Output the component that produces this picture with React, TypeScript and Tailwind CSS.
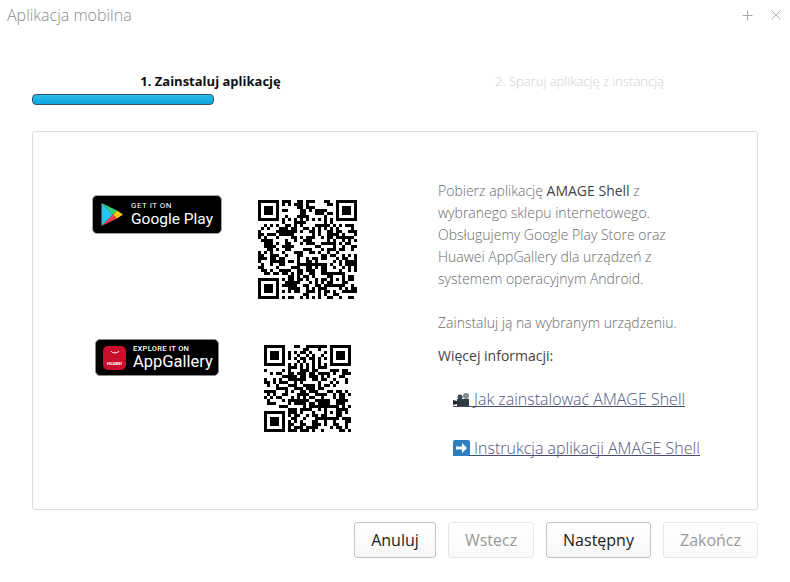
import React from "react";

function QR({ size, seed, px }: { size: number; seed: number; px: number }) {
  let s = seed;
  const next = () => {
    s = (s * 1664525 + 1013904223) >>> 0;
    return (s >>> 16) & 1;
  };
  const cells: boolean[][] = [];
  for (let y = 0; y < size; y++) {
    const row: boolean[] = [];
    for (let x = 0; x < size; x++) row.push(next() === 1);
    cells.push(row);
  }
  const finder = (ox: number, oy: number) => {
    for (let y = -1; y <= 7; y++)
      for (let x = -1; x <= 7; x++) {
        const cx = ox + x, cy = oy + y;
        if (cx < 0 || cy < 0 || cx >= size || cy >= size) continue;
        const ring = x === 0 || x === 6 || y === 0 || y === 6;
        const core = x >= 2 && x <= 4 && y >= 2 && y <= 4;
        cells[cy][cx] = x >= 0 && x <= 6 && y >= 0 && y <= 6 && (ring || core);
      }
  };
  finder(0, 0);
  finder(size - 7, 0);
  finder(0, size - 7);
  const a = size - 7;
  for (let y = -2; y <= 2; y++)
    for (let x = -2; x <= 2; x++)
      cells[a + y][a + x] = Math.max(Math.abs(x), Math.abs(y)) !== 1;
  for (let i = 8; i < size - 8; i++) {
    cells[6][i] = i % 2 === 0;
    cells[i][6] = i % 2 === 0;
  }
  let d = "";
  cells.forEach((r, y) => r.forEach((c, x) => { if (c) d += `M${x} ${y}h1v1h-1z`; }));
  return (
    <svg width={px} height={px} viewBox={`0 0 ${size} ${size}`} shapeRendering="crispEdges" className="block">
      <path d={d} fill="#000" />
    </svg>
  );
}

function GooglePlayBadge() {
  return (
    <div className="w-[130px] h-[39px] bg-black rounded-[5px] border border-[#a6a6a6] flex items-center pl-[8px] text-white">
      <svg width="23" height="25" viewBox="0 0 23 25" className="shrink-0">
        <path d="M0.500 1v23l11.500-11.500z" fill="#27c4f4" />
        <path d="M0.500 1L12 12.500l4-4z" fill="#34d37a" />
        <path d="M0.500 24L12 12.500l4 4z" fill="#ef4050" />
        <path d="M16 8.500l6 4-6 4-4-4z" fill="#fdc70c" />
      </svg>
      <div className="ml-[7px] flex flex-col font-['Roboto',sans-serif]">
        <span className="text-[8px] leading-[9px] font-normal tracking-[0.5px] whitespace-nowrap">GET IT ON</span>
        <span className="text-[15.500px] leading-[19px] font-normal whitespace-nowrap">Google Play</span>
      </div>
    </div>
  );
}

function AppGalleryBadge() {
  return (
    <div className="w-[124px] h-[37px] mt-[1px] bg-black rounded-[5px] border border-[#8a8a8a] flex items-center pl-[7px] text-white">
      <div className="w-[23px] h-[24px] rounded-[5px] bg-[#c8102e] shrink-0 flex flex-col items-center justify-between pt-[4px] pb-[4px]">
        <svg width="10" height="5" viewBox="0 0 10 5"><path d="M1 1c1 2.500 7 2.500 8 0" stroke="#fff" strokeWidth="1" fill="none" /></svg>
        <span className="text-[4px] leading-[5px] font-['Roboto',sans-serif] font-bold">HUAWEI</span>
      </div>
      <div className="ml-[7px] flex flex-col font-['Roboto',sans-serif]">
        <span className="text-[7.500px] leading-[9px] font-medium tracking-[0.3px] whitespace-nowrap">EXPLORE IT ON</span>
        <span className="text-[16.500px] leading-[18px] whitespace-nowrap">AppGallery</span>
      </div>
    </div>
  );
}

function Btn({ children, w, disabled }: { children: React.ReactNode; w: string; disabled?: boolean }) {
  return (
    <button
      className={
        disabled
          ? `${w} h-[36px] rounded-[3px] border border-[#e6e6e6] bg-gradient-to-b from-white to-[#fafafa] text-[16px] text-[#999]`
          : `${w} h-[36px] rounded-[3px] border border-[#c4c4c4] bg-gradient-to-b from-white to-[#f7f7f7] text-[16px] text-[#222]`
      }
    >
      {children}
    </button>
  );
}

export default function App() {
  return (
    <div className="w-[790px] h-[582px] bg-white flex flex-col font-['Open_Sans',sans-serif] overflow-hidden">
      <div className="h-[30px] flex items-center justify-between pl-[7px] pr-[9px]">
        <span className="text-[16px] font-light text-[#8c8c8c]">Aplikacja mobilna</span>
        <div className="flex items-center gap-[18px]">
          <svg width="11" height="11" viewBox="0 0 11 11"><path d="M5.500 0.500v10M0.500 5.500h10" stroke="#a8a8a8" strokeWidth="1" /></svg>
          <svg width="10" height="10" viewBox="0 0 10 10"><path d="M0.500 0.500l9 9M9.500 0.500l-9 9" stroke="#b0b0b0" strokeWidth="1" /></svg>
        </div>
      </div>

      <div className="px-[32px] pt-[40px]">
        <div className="grid grid-cols-2 h-[24px] items-center text-[13px]">
          <div className="text-center font-bold text-[#111] pr-[6px]">1. Zainstaluj aplikację</div>
          <div className="text-center font-light text-[#cfcfcf] pl-[6px]">2. Sparuj aplikację z instancją</div>
        </div>
        <div className="h-[11px] w-[182px] rounded-[4px] border border-[#3d5468] bg-gradient-to-b from-[#29bdec] to-[#07a5dc]" />
      </div>

      <div className="mx-[32px] mt-[26px] h-[379px] rounded-[3px] border border-[#dcdcdc] grid grid-cols-[405px_1fr]">
        <div className="grid grid-cols-[200px_101px] grid-rows-[143px_1fr] pt-[63px] pl-[24px]">
          <div className="flex justify-center"><GooglePlayBadge /></div>
          <div className="flex justify-center pt-[5px]"><QR size={33} seed={7} px={99} /></div>
          <div className="flex justify-center"><AppGalleryBadge /></div>
          <div className="flex justify-center pt-[7px]"><QR size={29} seed={23} px={87} /></div>
        </div>
        <div className="pt-[48px] text-[14px] leading-[22px] text-[#6b6b6b] font-light">
          <p className="w-[260px]">
            Pobierz aplikację <span className="font-normal text-[#444]">AMAGE Shell</span> z wybranego sklepu internetowego. Obsługujemy Google Play Store oraz Huawei AppGallery dla urządzeń z systemem operacyjnym Android.
          </p>
          <p className="mt-[22px]">Zainstaluj ją na wybranym urządzeniu.</p>
          <p className="mt-[11px] font-normal text-[#444]">Więcej informacji:</p>
          <a className="mt-[24px] ml-[15px] flex w-fit h-[16px] items-center gap-[4px] text-[16px] leading-[16px] border-b border-[#4a4a70] text-[#55557f]">
            <svg width="17" height="14" viewBox="0 0 17 14"><path d="M4 7h12v7H4z" fill="#2f3a40" /><path d="M0 8l4 1v3l-4 1z" fill="#1f272b" /><circle cx="7" cy="5" r="2.500" fill="#3b474d" /><circle cx="13" cy="4" r="3" fill="#7f8b91" /></svg>
            <span>Jak zainstalować AMAGE Shell</span>
          </a>
          <a className="mt-[33px] ml-[15px] flex w-fit h-[16px] items-center gap-[4px] text-[16px] leading-[16px] border-b border-[#4a4a70] text-[#55557f]">
            <svg width="17" height="16" viewBox="0 0 17 16"><rect width="17" height="16" rx="2" fill="#2f7fc0" /><path d="M3 6.500h6V3l5 5-5 5V9.500H3z" fill="#fff" /></svg>
            <span>Instrukcja aplikacji AMAGE Shell</span>
          </a>
        </div>
      </div>

      <div className="mx-[32px] mt-[12px] flex justify-end gap-[12px]">
        <Btn w="w-[82px]">Anuluj</Btn>
        <Btn w="w-[86px]" disabled>Wstecz</Btn>
        <Btn w="w-[105px]">Następny</Btn>
        <Btn w="w-[95px]" disabled>Zakończ</Btn>
      </div>
    </div>
  );
}
